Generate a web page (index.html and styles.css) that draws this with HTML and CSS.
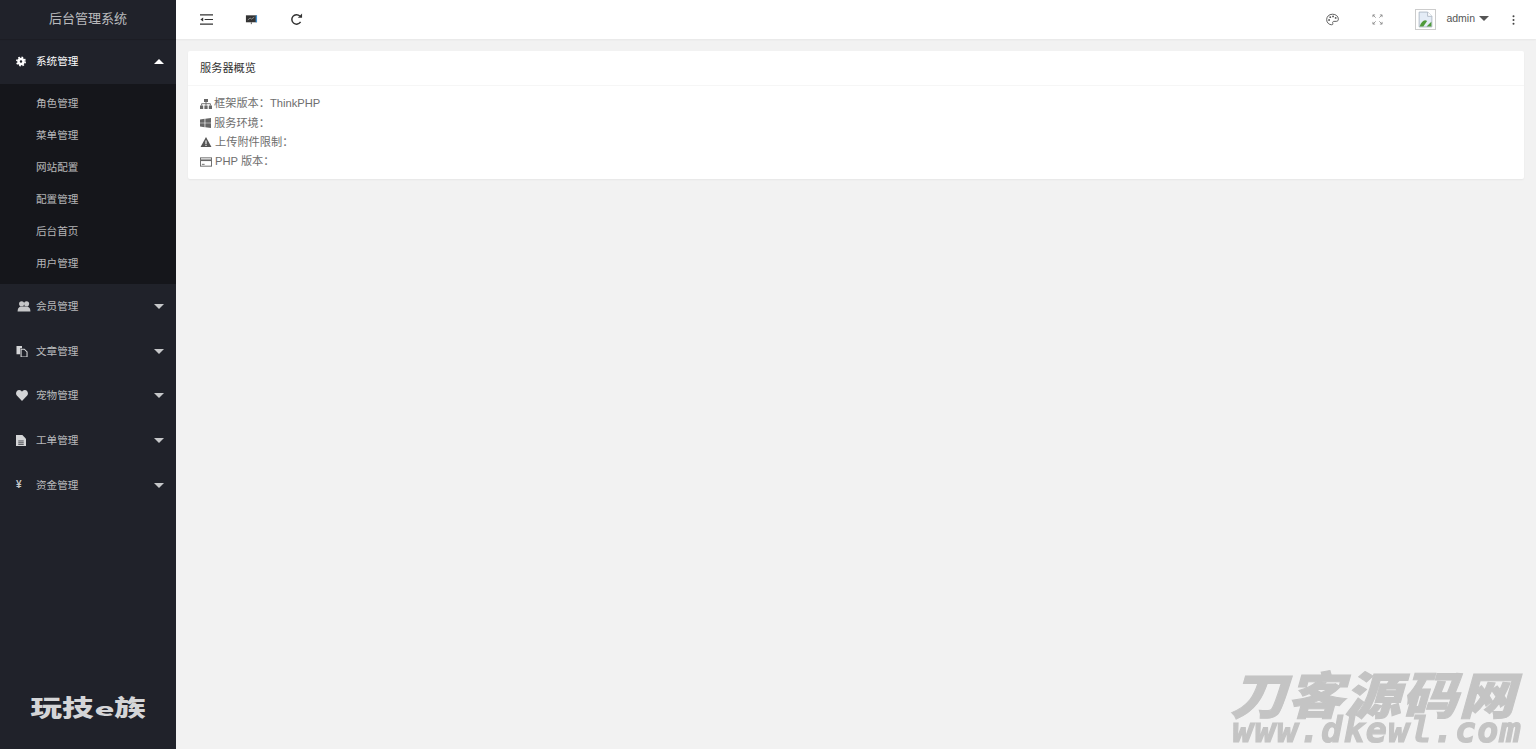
FILE: index.html
```html
<!DOCTYPE html>
<html lang="zh-CN">
<head>
    <meta charset="UTF-8">
    <title>后台管理系统</title>
    <link rel="stylesheet" href="styles.css">
</head>
<body>
    <div class="layout">
        <!-- Sidebar -->
        <div class="side">
            <div class="side-logo">后台管理系统</div>
            <div class="menu-item active">
                <svg class="menu-icon" viewBox="0 0 12 12"><circle cx="6" cy="6" r="3" fill="none" stroke="#fff" stroke-width="3"/><circle cx="6" cy="6" r="5" fill="none" stroke="#fff" stroke-width="2" stroke-dasharray="2 1.93"/></svg>
                <span class="menu-text">系统管理</span>
                <span class="arrow up"></span>
            </div>
            <div class="submenu">
                <div class="submenu-item">角色管理</div>
                <div class="submenu-item">菜单管理</div>
                <div class="submenu-item">网站配置</div>
                <div class="submenu-item">配置管理</div>
                <div class="submenu-item">后台首页</div>
                <div class="submenu-item">用户管理</div>
            </div>
            <div class="menu-item">
                <svg class="menu-icon users" viewBox="0 0 14 12"><circle cx="4.4" cy="3" r="2.8" fill="#c6c7c9"/><circle cx="9.8" cy="3" r="2.8" fill="#c6c7c9"/><path d="M0 11.5 C0 7.5 2 6 4 6 H10 C12 6 14 7.5 14 11.5Z" fill="#c6c7c9"/></svg>
                <span class="menu-text">会员管理</span>
                <span class="arrow"></span>
            </div>
            <div class="menu-item">
                <svg class="menu-icon big" viewBox="0 0 12 12"><path d="M0 0H6V2.5H4V9H0Z" fill="#d4d5d7"/><path d="M5 3.5H8.5L11.5 6.5V12H5Z" fill="none" stroke="#d4d5d7" stroke-width="1.2"/></svg>
                <span class="menu-text">文章管理</span>
                <span class="arrow"></span>
            </div>
            <div class="menu-item">
                <svg class="menu-icon big" viewBox="0 0 12 11"><path d="M6 11 L0.8 5.6 C-1 3.4 0.6 0 3.2 0 C4.5 0 5.4 0.8 6 1.7 C6.6 0.8 7.5 0 8.8 0 C11.4 0 13 3.4 11.2 5.6Z" fill="#d4d5d7"/></svg>
                <span class="menu-text">宠物管理</span>
                <span class="arrow"></span>
            </div>
            <div class="menu-item">
                <svg class="menu-icon" viewBox="0 0 11 12"><path d="M0 0H7L11 4V12H0Z" fill="#d4d5d7"/><path d="M2.5 6.5H8.5M2.5 8.5H8.5M2.5 10.3H8.5" stroke="#20222a" stroke-width="0.8"/></svg>
                <span class="menu-text">工单管理</span>
                <span class="arrow"></span>
            </div>
            <div class="menu-item">
                <span class="menu-icon yen">¥</span>
                <span class="menu-text">资金管理</span>
                <span class="arrow"></span>
            </div>
            <div class="side-brand"><span class="brand-text">玩技<span class="brand-e">e</span>族</span></div>
        </div>

        <div class="main">
            <!-- Top bar -->
            <div class="topbar">
                <div class="tool-group">
                    <svg class="tool" viewBox="0 0 14 12"><path d="M0 1H14M5 6H14M0 11H14" stroke="#333" stroke-width="1.3"/><path d="M3.4 3.8V8.2L0.4 6Z" fill="#333"/></svg>
                    <svg class="tool" viewBox="0 0 14 12"><rect x="1" y="1.5" width="11.5" height="7.5" fill="#333"/><rect x="11.5" y="1.5" width="1.5" height="7.5" fill="#3f8fd0"/><path d="M3 6.5L5.5 4.5L7 5.5L10 3.5" stroke="#bbb" stroke-width="0.7" fill="none"/><rect x="6.3" y="9" width="1" height="2" fill="#555"/></svg>
                    <svg class="tool" viewBox="0 0 14 14"><path d="M11.4 9.6A5.1 5.1 0 1 1 10.6 3.2" fill="none" stroke="#333" stroke-width="1.6"/><path d="M8.4 5.2H13V0.6Z" fill="#333"/></svg>
                </div>
                <div class="tool-group right">
                    <svg class="tool" viewBox="0 0 14 13"><path d="M7 .8C3 .8 .7 3.6 .7 6.6C.7 10 3.4 12.2 6.2 12.2C7.6 12.2 7.5 11 7.2 10.2C6.9 9.2 7.6 8.5 8.6 8.5H11C12.6 8.5 13.3 7.5 13.3 6.1C13.3 3 10.6 .8 7 .8Z" fill="none" stroke="#555" stroke-width="1"/><circle cx="3.3" cy="7" r="1" fill="#555"/><circle cx="4.6" cy="4" r="1" fill="#555"/><circle cx="7.6" cy="3.2" r="1" fill="#555"/><circle cx="10.4" cy="4.8" r="1" fill="#555"/></svg>
                    <svg class="tool small" viewBox="0 0 12 12"><path d="M1 1L4 4M1 1V3.4M1 1H3.4M11 1L8 4M11 1V3.4M11 1H8.6M1 11L4 8M1 11V8.6M1 11H3.4M11 11L8 8M11 11V8.6M11 11H8.6" stroke="#888" stroke-width="0.9" fill="none"/></svg>
                    <div class="avatar">
                        <svg viewBox="0 0 16 16"><path d="M2 1H10L14 5V15H2Z" fill="#e4ecf6" stroke="#a9b4c0" stroke-width="0.8"/><path d="M10 1V5H14" fill="#fff" stroke="#a9b4c0" stroke-width="0.8"/><path d="M2.5 14.5C4 10 7 7.5 9.5 9.5L6 14.5Z" fill="#4f9a3a"/><path d="M9 14.5L13.5 10V14.5Z" fill="#4f9a3a"/></svg>
                    </div>
                    <span class="user-name">admin</span>
                    <span class="arrow user"></span>
                    <svg class="kebab" viewBox="0 0 3 10"><circle cx="1.5" cy="1.2" r="1" fill="#444"/><circle cx="1.5" cy="5" r="1" fill="#444"/><circle cx="1.5" cy="8.8" r="1" fill="#444"/></svg>
                </div>
            </div>

            <!-- Content -->
            <div class="content">
                <div class="card">
                    <div class="card-header">服务器概览</div>
                    <div class="card-body">
                        <div class="info-row">
                            <svg class="info-icon sitemap" viewBox="0 0 12 10"><rect x="4" y="0" width="4" height="3" fill="#666"/><rect x="0" y="6.5" width="3.2" height="3.5" fill="#666"/><rect x="4.4" y="6.5" width="3.2" height="3.5" fill="#666"/><rect x="8.8" y="6.5" width="3.2" height="3.5" fill="#666"/><path d="M1.6 6.5V4.7H10.4V6.5M6 3V6.5" stroke="#666" stroke-width="0.9" fill="none"/></svg>
                            <span>框架版本：ThinkPHP</span>
                        </div>
                        <div class="info-row">
                            <svg class="info-icon windows" viewBox="0 0 11 10"><path d="M0 1.5L4.6 .8V4.7H0ZM5.3 .7L11 0V4.7H5.3ZM0 5.3H4.6V9.2L0 8.5ZM5.3 5.3H11V10L5.3 9.3Z" fill="#666"/></svg>
                            <span>服务环境：</span>
                        </div>
                        <div class="info-row">
                            <svg class="info-icon wide" viewBox="0 0 12 11"><path d="M6 0L12 11H0Z" fill="#555"/><path d="M6 3.8V7.6M6 8.5V9.8" stroke="#fff" stroke-width="1.2"/></svg>
                            <span>上传附件限制：</span>
                        </div>
                        <div class="info-row">
                            <svg class="info-icon wide" viewBox="0 0 13 10"><rect x=".5" y=".5" width="12" height="9" fill="none" stroke="#666"/><rect x="1" y="2.2" width="11" height="1.8" fill="#666"/><rect x="2" y="7" width="3" height="1" fill="#666"/></svg>
                            <span>PHP 版本：</span>
                        </div>
                    </div>
                </div>
            </div>
        </div>
    </div>

    <!-- Site watermark -->
    <div class="watermark">
        <div class="watermark-name">刀客源码网</div>
        <div class="watermark-url">www.dkewl.com</div>
    </div>
</body>
</html>
```

FILE: styles.css
```css
* { box-sizing: border-box; }
html, body { height: 100%; margin: 0; overflow: hidden; }
body { font-family: "Liberation Sans", "Noto Sans CJK SC", sans-serif; background-color: #f2f2f2; color: #6e6e6e; }

.layout { display: flex; height: 100%; }

/* sidebar */
.side { width: 176px; flex-shrink: 0; display: flex; flex-direction: column; background-color: #20222a; }
.side-logo { height: 39px; line-height: 38px; text-align: center; font-size: 13px; color: rgba(255, 255, 255, .7); background-color: #20222a; box-shadow: 0 1px 1px rgba(0, 0, 0, .12); }
.menu-item { height: 44.8px; display: flex; align-items: center; padding: 0 12px 0 16px; font-size: 10.6px; color: rgba(255, 255, 255, .7); }
.menu-item.active { color: #fff; height: 45px; }
.menu-icon { width: 10px; height: 11px; flex-shrink: 0; }
.menu-icon.big { width: 12px; margin-right: -2px; }
.menu-icon.users { width: 14px; height: 11px; margin-left: 1px; margin-right: -5px; }
.yen { font-size: 10px; line-height: 10px; color: #c6c7c9; font-weight: bold; }
.menu-text { margin-left: 10px; flex: 1; padding-bottom: 2px; }
.arrow { width: 0; height: 0; border-left: 5px solid transparent; border-right: 5px solid transparent; border-top: 5px solid #c6c7c9; }
.arrow.up { border-top: 0; border-bottom: 5px solid #fff; }
.submenu { background-color: #15161b; padding: 3px 0 5px; }
.submenu-item { height: 32px; line-height: 32px; padding-left: 36px; font-size: 10.6px; color: rgba(255, 255, 255, .7); }
.side-brand { margin-top: auto; padding-bottom: 27px; text-align: center; font-family: "Noto Sans CJK SC", sans-serif; font-weight: 900; font-size: 23px; line-height: 32px; color: #d4d5d7; }
.brand-text { display: inline-block; transform: scaleX(1.37); }
.brand-e { display: inline-block; margin: 0 2.5px; font-size: 17px; line-height: 17px; transform: scaleX(1.45); }

/* top bar */
.main { flex: 1; min-width: 0; display: flex; flex-direction: column; }
.topbar { height: 39px; display: flex; justify-content: space-between; align-items: center; background-color: #fff; box-shadow: 0 1px 2px rgba(0, 0, 0, .05); padding: 0 21px 0 24px; }
.tool-group { display: flex; align-items: center; gap: 32px; }
.tool-group.right { gap: 0; }
.tool { width: 13px; height: 13px; }
.tool.small { width: 11px; height: 11px; margin-left: 33px; }
.avatar { width: 21px; height: 21px; margin-left: 32px; border: 1px solid #ccc; padding: 1px; }
.avatar svg { display: block; width: 17px; height: 17px; }
.user-name { margin-left: 10px; font-size: 10.5px; color: #555; margin-top: -3px; }
.arrow.user { border-top-color: #555; margin-left: 4px; margin-top: -2px; }
.kebab { width: 3px; height: 10px; margin-left: 23px; }

/* content */
.content { padding: 12px; }
.card { background-color: #fff; border-radius: 2px; box-shadow: 0 1px 2px rgba(0, 0, 0, .05); }
.card-header { height: 35px; line-height: 34px; padding: 0 12px; font-size: 11.2px; color: #333; border-bottom: 1px solid #f6f6f6; }
.card-body { padding: 8.4px 12px 7.6px; font-size: 11.2px; line-height: 19.2px; }
.info-row { display: flex; align-items: center; height: 19.2px; gap: 3px; }
.info-icon { width: 11px; height: 10px; flex-shrink: 0; }
.info-icon.sitemap { width: 12px; margin-right: -1px; }
.info-icon.wide { width: 12px; }

/* watermark */
.watermark { position: fixed; right: 14px; bottom: 0; width: 290px; color: #c4c4c4; font-style: italic; font-weight: 900; text-align: center; }
.watermark-name { font-family: "Noto Sans CJK SC", sans-serif; font-size: 50px; line-height: 48px; letter-spacing: 1px; white-space: nowrap; transform: translateX(-4px) scaleX(1.12); -webkit-text-stroke: 1px #c4c4c4; }
.watermark-url { font-family: "DejaVu Sans Mono", monospace; font-weight: bold; font-size: 35px; line-height: 28px; letter-spacing: 1.2px; margin-bottom: 5px; white-space: nowrap; -webkit-text-stroke: 1.2px #c4c4c4; }
```
